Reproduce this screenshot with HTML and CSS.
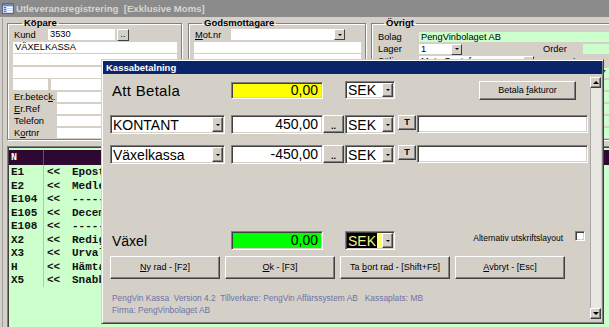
FILE: index.html
```html
<!DOCTYPE html>
<html lang="sv">
<head>
  <meta charset="UTF-8" />
  <title>Utleveransregistrering</title>
  <link rel="stylesheet" href="styles.css">
</head>
<body>
  <div class="app">
    <div class="titlebar">
      <svg class="appicon" width="12" height="11" viewBox="0 0 12 11">
        <rect x="0.5" y="0.5" width="11" height="10" fill="#c9d5ee" stroke="#55689a"/>
        <rect x="1" y="1" width="10" height="2" fill="#6f86c0"/>
        <rect x="2" y="4" width="2" height="1" fill="#55689a"/>
        <rect x="5" y="4" width="5" height="1" fill="#fff"/>
        <rect x="2" y="6" width="2" height="1" fill="#55689a"/>
        <rect x="5" y="6" width="5" height="1" fill="#fff"/>
        <rect x="2" y="8" width="2" height="1" fill="#55689a"/>
        <rect x="5" y="8" width="5" height="1" fill="#fff"/>
      </svg>
      <span class="apptitle">Utleveransregistrering  [Exklusive Moms]</span>
    </div>

    <div class="client">
      <div class="groups">
        <fieldset class="grp grp-kop">
          <legend>Köpare</legend>
          <div class="frow top">
            <span class="flbl lbl-kund">Kund</span>
            <span class="wf w-kund">3530</span>
            <span class="minibtn">..</span>
          </div>
          <div class="frow"><span class="wf grow">VÄXELKASSA</span></div>
          <div class="frow"><span class="wf grow"></span></div>
          <div class="frow"><span class="wf grow"></span></div>
          <div class="frow"><span class="wf w-zip"></span><span class="wf grow"></span></div>
          <div class="frow er first-er"><span class="flbl lbl-er">Er.betec<u>k</u>.</span><span class="wf grow"></span></div>
          <div class="frow er"><span class="flbl lbl-er"><u>E</u>r.Ref</span><span class="wf grow"></span></div>
          <div class="frow er"><span class="flbl lbl-er">Telefon</span><span class="wf grow"></span></div>
          <div class="frow er"><span class="flbl lbl-er">K<u>o</u>rtnr</span><span class="wf grow"></span></div>
        </fieldset>

        <fieldset class="grp grp-mot">
          <legend>Godsmottagare</legend>
          <div class="frow top">
            <span class="flbl lbl-mot"><u>M</u>ot.nr</span>
            <span class="wf w-mot"><span class="minidrop"></span></span>
          </div>
          <div class="frow"><span class="wf grow"></span></div>
          <div class="frow"><span class="wf grow"></span></div>
        </fieldset>

        <fieldset class="grp grp-ovr">
          <legend>Övrigt</legend>
          <div class="frow orow first-o">
            <span class="flbl lbl-ovr">Bolag</span>
            <span class="gf grow">PengVinbolaget AB</span>
          </div>
          <div class="frow orow">
            <span class="flbl lbl-ovr">Lager</span>
            <span class="wf w-lager">1</span>
            <span class="minidrop solo"></span>
            <span class="flbl lbl-order">Order</span>
            <span class="gf grow"></span>
          </div>
          <div class="frow orow">
            <span class="flbl lbl-ovr">Säljare</span>
            <span class="wf w-salj">Mats Gustafsson</span>
            <span class="minidrop solo"></span>
            <span class="flbl lbl-order2">Lev.</span>
            <span class="gf grow"></span>
          </div>
          <div class="frow orow"><span class="gf grow right-cell">2007</span></div>
          <div class="frow orow"><span class="gf grow right-cell"></span></div>
          <div class="frow orow"><span class="gf grow right-cell"></span></div>
          <div class="frow orow"><span class="gf grow right-cell"></span></div>
          <div class="frow orow"><span class="gf grow right-cell"></span></div>
          <div class="frow orow"><span class="gf grow right-cell"></span></div>
        </fieldset>
      </div>

      <div class="list">
        <div class="lhead"><span class="c1">N</span><span class="c2"></span><span class="c3"></span></div>
        <div class="lrow"><span class="c1">E1</span><span class="c2">&lt;&lt;</span><span class="c3">Epostutskick</span></div>
        <div class="lrow"><span class="c1">E2</span><span class="c2">&lt;&lt;</span><span class="c3">Medlemskort</span></div>
        <div class="lrow"><span class="c1">E104</span><span class="c2">&lt;&lt;</span><span class="c3">------------</span></div>
        <div class="lrow"><span class="c1">E105</span><span class="c2">&lt;&lt;</span><span class="c3">December</span></div>
        <div class="lrow"><span class="c1">E108</span><span class="c2">&lt;&lt;</span><span class="c3">------------</span></div>
        <div class="lrow"><span class="c1">X2</span><span class="c2">&lt;&lt;</span><span class="c3">Redigera</span></div>
        <div class="lrow"><span class="c1">X3</span><span class="c2">&lt;&lt;</span><span class="c3">Urval</span></div>
        <div class="lrow"><span class="c1">H</span><span class="c2">&lt;&lt;</span><span class="c3">Hämta</span></div>
        <div class="lrow"><span class="c1">X5</span><span class="c2">&lt;&lt;</span><span class="c3">Snabbval</span></div>
      </div>
    </div>

    <div class="dialog">
      <div class="dlg-title">Kassabetalning</div>
      <div class="dlg-body">
        <div class="dlg-main">
          <div class="pay-row row-total">
            <span class="big-lbl lbl-total">Att Betala</span>
            <span class="amount sunk yellow">0,00</span>
            <span class="combo cur sunk"><span class="combo-text">SEK</span><span class="drop"></span></span>
            <button class="btn btn-invoice">Betala <u>f</u>akturor</button>
          </div>

          <div class="pay-row row-first">
            <span class="combo method sunk"><span class="combo-text">KONTANT</span><span class="drop"></span></span>
            <span class="amount sunk">450,00</span>
            <button class="btn btn-dots">..</button>
            <span class="combo cur sunk"><span class="combo-text">SEK</span><span class="drop"></span></span>
            <button class="btn btn-t">T</button>
            <span class="note sunk"></span>
          </div>

          <div class="pay-row row-second">
            <span class="combo method sunk"><span class="combo-text">Växelkassa</span><span class="drop"></span></span>
            <span class="amount sunk">-450,00</span>
            <button class="btn btn-dots">..</button>
            <span class="combo cur sunk"><span class="combo-text">SEK</span><span class="drop"></span></span>
            <button class="btn btn-t">T</button>
            <span class="note sunk"></span>
          </div>

          <div class="pay-row row-change">
            <span class="big-lbl">Växel</span>
            <span class="amount sunk green">0,00</span>
            <span class="combo cur sunk"><span class="combo-text"><span class="sel">SEK</span><span class="caret"></span></span><span class="drop"></span></span>
            <span class="alt-lbl">Alternativ utskriftslayout</span>
            <span class="check sunk"></span>
          </div>

          <div class="btn-row">
            <button class="btn btn-big"><u>N</u>y rad - [F2]</button>
            <button class="btn btn-big"><u>O</u>k - [F3]</button>
            <button class="btn btn-big">Ta <u>b</u>ort rad - [Shift+F5]</button>
            <button class="btn btn-big"><u>A</u>vbryt - [Esc]</button>
          </div>

          <div class="about">
            <div class="about-line">PengVin Kassa  Version 4.2  Tillverkare: PengVin Affärssystem AB   Kassaplats: MB</div>
            <div class="about-line">Firma: PengVinbolaget AB</div>
          </div>
        </div>

        <div class="vscroll">
          <span class="sb-btn up"></span>
          <span class="sb-track"></span>
          <span class="sb-btn down"></span>
        </div>
      </div>
    </div>
  </div>
</body>
</html>
```

FILE: styles.css
```css
* {
  box-sizing: border-box;
}
body {
  margin: 0;
  background: #d4d0c8;
  font-family: "Liberation Sans", Arial, sans-serif;
  color: #000;
}
u {
  text-decoration: underline;
  text-underline-offset: 1px;
}
.app {
  position: relative;
  width: 609px;
  height: 327px;
  overflow: hidden;
  background: #d4d0c8;
}

/* main window */
.titlebar {
  display: flex;
  align-items: center;
  height: 18px;
  padding-left: 2px;
  background: #8b8b8b;
  border-bottom: 1px solid #d4d0c8;
}
.appicon {
  margin-right: 2px;
}
.apptitle {
  color: #d8d5ce;
  font-weight: bold;
  font-size: 9.6px;
  white-space: pre;
}
.client {
  height: 309px;
  margin-left: 2px;
  border-left: 1px solid #a0a0a0;
}
.groups {
  display: flex;
  gap: 6px;
  padding: 0 0 0 4px;
}
.grp {
  flex: none;
  height: 122px;
  margin: 0;
  padding: 1px 4px 0 5px;
  border: 1px solid #808080;
  box-shadow: inset 1px 1px #fff, 1px 1px #fff;
  min-width: 0;
}
.grp legend {
  margin-left: 9px;
  padding: 0 2px;
  font-size: 9.5px;
  font-weight: bold;
  line-height: 10px;
}
.grp-kop {
  width: 175px;
}
.grp-mot {
  width: 178px;
}
.grp-mot legend {
  margin-left: 8px;
}
.grp-ovr {
  width: 280px;
  margin-left: -1px;
}
.grp-ovr legend {
  margin-left: 7px;
}
.frow {
  display: flex;
  align-items: center;
  height: 11px;
  margin-top: 1.5px;
  font-size: 9.3px;
}
.frow.top {
  margin-top: 0;
}
.frow.er {
  height: 10px;
  margin-top: 2px;
}
.flbl {
  padding-left: 1px;
  white-space: nowrap;
}
.lbl-kund {
  width: 35px;
}
.lbl-er {
  width: 44px;
}
.lbl-mot {
  width: 37px;
}
.lbl-ovr {
  width: 42px;
}
.wf,
.gf {
  position: relative;
  height: 100%;
  padding-left: 2px;
  line-height: 11px;
  background: #fff;
  overflow: hidden;
  white-space: nowrap;
}
.gf {
  background: #ccffcc;
}
.grow {
  flex: 1;
}
.w-kund {
  width: 67px;
}
.w-zip {
  width: 35px;
  margin-right: 3px;
}
.w-mot {
  width: 114px;
  display: flex;
  justify-content: flex-end;
  padding: 0;
}
.w-lager {
  width: 32px;
}
.w-salj {
  width: 104px;
}
.minibtn {
  width: 12px;
  height: 12px;
  margin-left: 2px;
  font-size: 9px;
  line-height: 8px;
  text-align: center;
  background: #d4d0c8;
  border: 1px solid;
  border-color: #fff #404040 #404040 #fff;
}
.minidrop {
  display: flex;
  align-items: center;
  justify-content: center;
  width: 11px;
  height: 100%;
  background: #d4d0c8;
  border: 1px solid;
  border-color: #fff #404040 #404040 #fff;
}
.minidrop::after,
.drop::after {
  content: "";
  border-left: 2px solid transparent;
  border-right: 2px solid transparent;
  border-top: 2px solid #000;
}
.minidrop.solo {
  height: 11px;
}
.lbl-order {
  width: 41px;
  margin-left: 80px;
}
.lbl-order2 {
  width: 41px;
  margin-left: 38px;
}
.orow {
  height: 10px;
  margin-top: 2px;
}
.orow.first-o {
  margin-top: 3px;
}
.right-cell {
  margin-left: 206px;
}

/* list */
.list {
  height: 182px;
  margin: 6px 0 0 4px;
  padding: 3px 0 0 1px;
  background: #ccffcc;
  border-top: 1px solid #808080;
  border-left: 1px solid #808080;
  box-shadow: inset 1px 1px #404040;
  font-family: "Liberation Mono", monospace;
  font-size: 11px;
  font-weight: bold;
}
.lhead,
.lrow {
  display: grid;
  grid-template-columns: 35px 28px 1fr;
  white-space: nowrap;
}
.lhead {
  height: 15px;
  line-height: 15px;
  background: #2e0830;
  color: #fff;
  font-size: 10px;
}
.lrow {
  height: 13.5px;
  line-height: 14px;
  color: #111;
}
.c1 {
  padding-left: 2px;
  border-right: 1px solid #b4c6b4;
}
.lhead .c1 {
  border-right-color: #6a4a6a;
}
.c2 {
  padding-left: 3px;
}

/* dialog */
.dialog {
  position: absolute;
  left: 101px;
  top: 59px;
  width: 503px;
  height: 265px;
  display: flex;
  flex-direction: column;
  padding: 1px;
  background: #d4d0c8;
  border: 1px solid;
  border-color: #d4d0c8 #404040 #404040 #d4d0c8;
  box-shadow: inset 1px 1px #fff, inset -1px -1px #808080;
}
.dlg-title {
  height: 13px;
  line-height: 13px;
  padding-left: 3px;
  background: #0a246a;
  color: #fff;
  font-size: 9.5px;
  font-weight: bold;
}
.dlg-body {
  flex: 1;
  display: flex;
}
.dlg-main {
  flex: 1;
  padding-left: 7px;
}
.pay-row {
  display: flex;
  align-items: center;
  height: 19px;
}
.row-total {
  height: 18px;
  margin-top: 7px;
}
.row-first {
  margin-top: 16px;
}
.row-second {
  margin-top: 11px;
}
.row-change {
  margin-top: 67px;
}
.sunk {
  background: #fff;
  border: 1px solid;
  border-color: #808080 #fff #fff #808080;
  box-shadow: inset 1px 1px #404040, inset -1px -1px #d4d0c8;
}
.big-lbl {
  width: 121px;
  padding-left: 2px;
  font-size: 14px;
}
.lbl-total {
  font-size: 15px;
  letter-spacing: 0.3px;
}
.amount {
  width: 92px;
  height: 19px;
  padding-right: 4px;
  font-size: 14px;
  line-height: 17px;
  text-align: right;
}
.row-total .amount {
  height: 17px;
  line-height: 15px;
}
.yellow {
  background: #ffff00;
}
.green {
  background: #00ff00;
}
.combo {
  display: flex;
  height: 19px;
  padding: 1px;
  font-size: 14px;
}
.row-total .combo {
  height: 18px;
}
.combo-text {
  flex: 1;
  display: flex;
  align-items: center;
  padding-left: 1px;
  line-height: 14px;
  white-space: nowrap;
}
.cur {
  width: 50px;
  margin-left: 1px;
}
.row-total .cur,
.row-change .cur {
  margin-left: 22px;
}
.method {
  width: 115px;
  margin-right: 6px;
}
.drop {
  display: flex;
  align-items: center;
  justify-content: center;
  width: 11px;
  background: #d4d0c8;
  border: 1px solid;
  border-color: #fff #404040 #404040 #fff;
  box-shadow: inset -1px -1px #808080;
}
.sel {
  align-self: stretch;
  display: flex;
  align-items: center;
  padding: 0 1px;
  margin-left: -1px;
  background: #000;
  color: #f2f28a;
}
.caret {
  align-self: stretch;
  width: 5px;
  background: #ffff66;
}
.btn {
  display: block;
  margin: 0;
  padding: 0;
  background: #d4d0c8;
  border: 1px solid;
  border-color: #fff #404040 #404040 #fff;
  box-shadow: inset -1px -1px #808080;
  font-family: "Liberation Sans", Arial, sans-serif;
  font-size: 9px;
  text-align: center;
  white-space: nowrap;
  color: #000;
}
.btn-invoice {
  width: 97px;
  height: 19px;
  margin-left: 84px;
  line-height: 17px;
}
.btn-dots {
  width: 21px;
  height: 18px;
  align-self: flex-start;
  font-weight: bold;
  line-height: 20px;
}
.btn-t {
  width: 18px;
  height: 15px;
  margin-left: 3px;
  align-self: flex-start;
  font-weight: bold;
  line-height: 13px;
}
.note {
  flex: 1;
  height: 18px;
  margin: 0 2px 0 1px;
  align-self: flex-start;
}
.alt-lbl {
  align-self: flex-start;
  margin: 1px 12px 0 auto;
  font-size: 8.5px;
  line-height: 12px;
}
.check {
  align-self: flex-start;
  width: 10px;
  height: 10px;
  margin-right: 5px;
}
.btn-row {
  display: flex;
  gap: 5px;
  margin-top: 6px;
}
.btn-big {
  width: 110px;
  height: 23px;
  line-height: 21px;
}
.about {
  margin-top: 13px;
  padding-left: 2px;
  color: #6e72a8;
  font-size: 8.4px;
  line-height: 12px;
}
.about-line {
  white-space: pre;
}
.vscroll {
  display: flex;
  flex-direction: column;
  width: 11px;
  margin: 3px 1px 3px 0;
}
.sb-btn {
  display: flex;
  align-items: center;
  justify-content: center;
  height: 11px;
  background: #d4d0c8;
  border: 1px solid;
  border-color: #fff #404040 #404040 #fff;
  box-shadow: inset -1px -1px #808080;
}
.sb-btn::after {
  content: "";
  border-left: 3px solid transparent;
  border-right: 3px solid transparent;
}
.up::after {
  border-bottom: 3px solid #000;
}
.down::after {
  border-top: 3px solid #000;
}
.sb-track {
  flex: 1;
  background: #e9e7e2;
  border-left: 1px solid #a8a8a8;
}
```
